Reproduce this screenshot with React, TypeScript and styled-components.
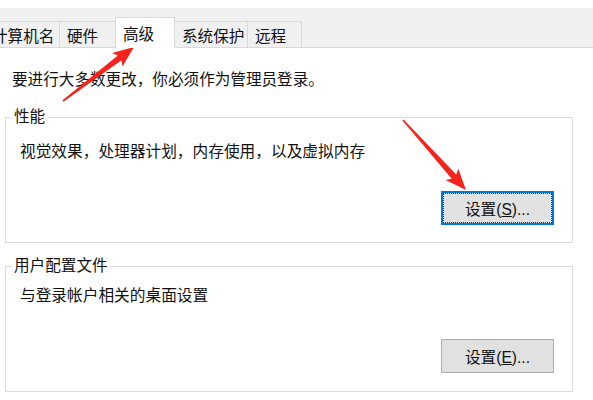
import styled, { createGlobalStyle } from 'styled-components'

const GlobalStyle = createGlobalStyle`
  * { box-sizing: border-box; }
  body {
    margin: 0;
    background: #ffffff;
    font-family: "Liberation Sans", "Noto Sans CJK SC", sans-serif;
    color: #111111;
  }
`

const Page = styled.div`
  position: relative;
  width: 593px;
  height: 400px;
  overflow: hidden;
  background: #ffffff;
`

const TabBar = styled.div`
  margin-top: 8px;
  height: 40px;
  background: #f0f0f0;
  border-bottom: 1px solid #d9d9d9;
  display: flex;
  align-items: flex-end;
`

const TabList = styled.div`
  display: flex;
  align-items: flex-end;
  margin-left: -15px;
`

const Tab = styled.div<{ $w: number; $active?: boolean }>`
  position: relative;
  width: ${p => p.$w}px;
  height: ${p => (p.$active ? 31 : 26)}px;
  margin-left: -1px;
  margin-bottom: ${p => (p.$active ? -1 : 0)}px;
  padding-left: 7px;
  display: flex;
  align-items: center;
  font-size: 15.6px;
  white-space: nowrap;
  background: ${p => (p.$active ? '#ffffff' : '#f0f0f0')};
  border: 1px solid #d9d9d9;
  border-bottom: none;
  z-index: ${p => (p.$active ? 2 : 1)};
`

const Content = styled.div`
  padding: 22px 20px 0 5px;
`

const Notice = styled.div`
  margin-left: 7px;
  font-size: 15.6px;
  line-height: 20px;
`

const GroupBox = styled.fieldset<{ $top: number; $bottom: number }>`
  margin: ${p => p.$top}px 0 0;
  min-width: 0;
  border: 1px solid #dcdcdc;
  padding: 0 18px ${p => p.$bottom}px 0;
`

const Legend = styled.legend`
  margin-left: 6px;
  padding: 0 2px;
  font-size: 15.6px;
  line-height: 18px;
`

const Desc = styled.div<{ $top: number }>`
  margin: ${p => p.$top}px 0 0 14px;
  font-size: 15.7px;
  line-height: 20px;
`

const ButtonRow = styled.div<{ $top: number }>`
  display: flex;
  justify-content: flex-end;
  margin-top: ${p => p.$top}px;
`

const Button = styled.button<{ $focused?: boolean }>`
  width: 113px;
  height: 34px;
  padding: 0;
  font-family: inherit;
  font-size: 15.6px;
  color: #111111;
  background: #e1e1e1;
  border: 1px solid ${p => (p.$focused ? '#0078d7' : '#adadad')};
  box-shadow: ${p => (p.$focused ? 'inset 0 0 0 1px #0078d7' : 'none')};
  outline: ${p => (p.$focused ? '1px dotted #333333' : 'none')};
  outline-offset: -3px;
  border-radius: 0;
`

const Overlay = styled.svg`
  position: absolute;
  left: 0;
  top: 0;
  pointer-events: none;
`

function arrowPoints (tx: number, ty: number, px: number, py: number) {
  const dx = px - tx
  const dy = py - ty
  const len = Math.hypot(dx, dy)
  const ux = dx / len
  const uy = dy / len
  const nx = -uy
  const ny = ux
  const bx = px - ux * 18
  const by = py - uy * 18
  const pts = [
    [tx + nx * 0.8, ty + ny * 0.8],
    [bx + nx * 3, by + ny * 3],
    [bx - ux * 3 + nx * 8.5, by - uy * 3 + ny * 8.5],
    [px, py],
    [bx - ux * 3 - nx * 8.5, by - uy * 3 - ny * 8.5],
    [bx - nx * 3, by - ny * 3],
    [tx - nx * 0.8, ty - ny * 0.8]
  ]
  return pts.map(p => p.join(',')).join(' ')
}

const tabs = [
  { label: '计算机名', w: 76 },
  { label: '硬件', w: 57 },
  { label: '高级', w: 60, active: true },
  { label: '系统保护', w: 74 },
  { label: '远程', w: 55 }
]

export default function App () {
  return (
    <Page>
      <GlobalStyle />
      <TabBar>
        <TabList>
          {tabs.map(t => (
            <Tab key={t.label} $w={t.w} $active={t.active}>{t.label}</Tab>
          ))}
        </TabList>
      </TabBar>
      <Content>
        <Notice>要进行大多数更改，你必须作为管理员登录。</Notice>
        <GroupBox $top={18} $bottom={17}>
          <Legend>性能</Legend>
          <Desc $top={16}>视觉效果，处理器计划，内存使用，以及虚拟内存</Desc>
          <ButtonRow $top={29}>
            <Button $focused>设置(<u>S</u>)...</Button>
          </ButtonRow>
        </GroupBox>
        <GroupBox $top={14} $bottom={18}>
          <Legend>用户配置文件</Legend>
          <Desc $top={11}>与登录帐户相关的桌面设置</Desc>
          <ButtonRow $top={33}>
            <Button>设置(<u>E</u>)...</Button>
          </ButtonRow>
        </GroupBox>
      </Content>
      <Overlay width={593} height={400}>
        <polygon points={arrowPoints(63, 101, 134, 47)} fill='#f5231b' />
        <polygon points={arrowPoints(403, 120, 466, 190)} fill='#f5231b' />
      </Overlay>
    </Page>
  )
}
